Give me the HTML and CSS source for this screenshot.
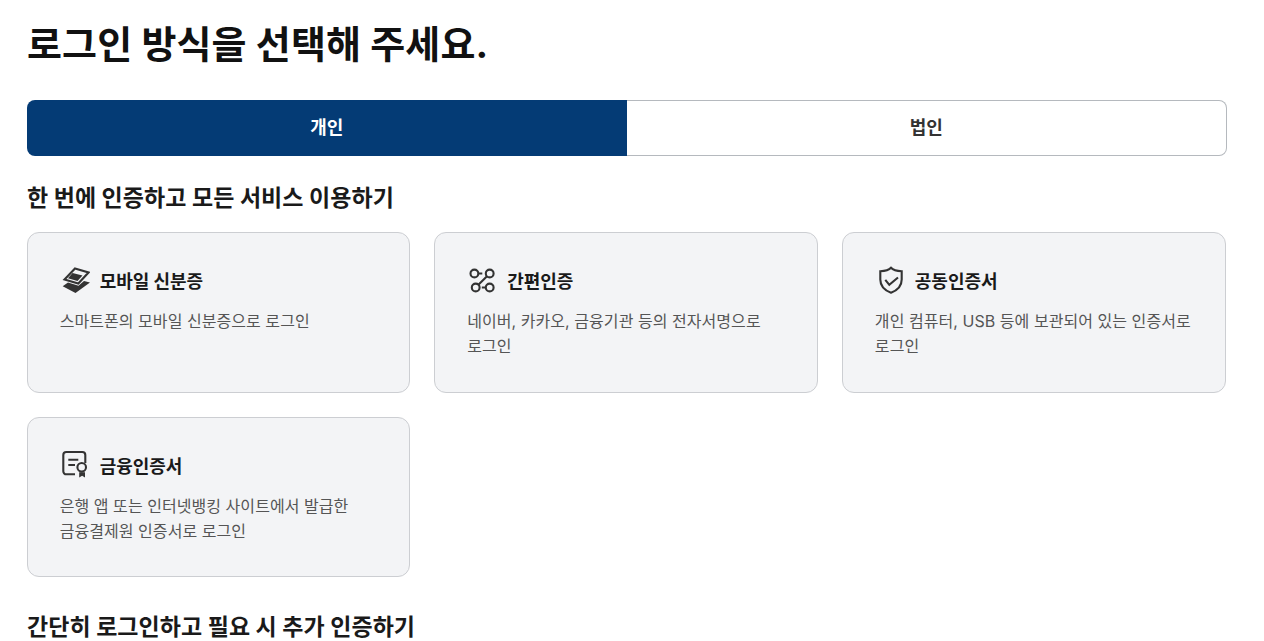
FILE: index.html
```html
<!DOCTYPE html>
<html lang="ko">
<head>
<meta charset="utf-8">
<title>로그인 방식 선택</title>
<link rel="stylesheet" href="styles.css">
</head>
<body>
<main class="page">
  <h1 class="title">로그인 방식을 선택해 주세요.</h1>
  <div class="tabs">
    <button class="tab tab-on">개인</button>
    <button class="tab">법인</button>
  </div>
  <h2 class="section">한 번에 인증하고 모든 서비스 이용하기</h2>
  <div class="cards">
    <article class="card">
      <div class="card-head">
        <svg class="icon" viewBox="0 0 30 30"><path class="line" d="M15 3.5 28.5 7.5 18.3 18.5 4.5 14.5z"/><path class="solid" d="M12.5 8 22.5 10.5l-5 5.5-9.5-2.7z"/><path class="solid" d="M2.7 21.2 8 17.5l10.5 3.3L24 16l6 1.5L15.5 28z"/></svg>
        <h3 class="card-title">모바일 신분증</h3>
      </div>
      <p class="card-text">스마트폰의 모바일 신분증으로 로그인</p>
    </article>
    <article class="card">
      <div class="card-head">
        <svg class="icon" viewBox="0 0 30 30"><circle class="line" cx="7.4" cy="8.5" r="3.9"/><circle class="line" cx="22.7" cy="8.5" r="3.9"/><circle class="line" cx="8.7" cy="22.5" r="3.9"/><circle class="line" cx="22.7" cy="22.5" r="3.9"/><path class="line" d="M11.3 8.5h4M20 11.3l-8.6 8.4M18.8 22.5h-4"/></svg>
        <h3 class="card-title">간편인증</h3>
      </div>
      <p class="card-text">네이버, 카카오, 금융기관 등의 전자서명으로 로그인</p>
    </article>
    <article class="card">
      <div class="card-head">
        <svg class="icon" viewBox="0 0 30 30"><path class="line" d="M16 2.8C18 5 22 6.1 26.7 6.3V14.5C26.7 21.5 22 25.5 16 27.7 10 25.5 5.3 21.5 5.3 14.5V6.3C10 6.1 14 5 16 2.8Z"/><path class="line" d="m10.3 14.8 4 5 8.7-7.3"/></svg>
        <h3 class="card-title">공동인증서</h3>
      </div>
      <p class="card-text">개인 컴퓨터, USB 등에 보관되어 있는 인증서로 로그인</p>
    </article>
    <article class="card">
      <div class="card-head">
        <svg class="icon" viewBox="0 0 30 30"><path class="line" d="M15 24.3H6.3a3 3 0 0 1-3-3V5a3 3 0 0 1 3-3h16a3 3 0 0 1 3 3v8"/><path class="line" d="M8.3 9.7h10M8.3 15h6.7"/><circle class="line" cx="21.7" cy="17.3" r="4.3"/><path class="solid" d="M19.2 22.3h5.8v5.2l-2.9-1.7-2.9 1.7z"/></svg>
        <h3 class="card-title">금융인증서</h3>
      </div>
      <p class="card-text">은행 앱 또는 인터넷뱅킹 사이트에서 발급한<br>금융결제원 인증서로 로그인</p>
    </article>
  </div>
  <h2 class="section section-next">간단히 로그인하고 필요 시 추가 인증하기</h2>
</main>
</body>
</html>
```
FILE: styles.css
```css
* { box-sizing: border-box; }
html, body { margin: 0; height: 100%; overflow: hidden; background: #fff; }
body { font-family: Inter, "Noto Sans CJK KR", sans-serif; color: #1a1a1a; }
.page { width: 1200px; margin-left: 27px; padding-top: 18px; }
.title { margin: 0; font-size: 38px; line-height: 52px; font-weight: 700; letter-spacing: 0.13px; color: #111; }
.tabs { display: flex; margin-top: 30px; height: 56px; }
.tab { flex: 1; border: 1px solid #b5b9be; border-left: 0; background: #fff; border-radius: 0 8px 8px 0; font: inherit; font-size: 18px; font-weight: 700; color: #333; padding: 0 0 4px; }
.tab-on { background: #043b75; border: 0; border-radius: 8px 0 0 8px; color: #fff; }
.section { margin: 26px 0 0; font-size: 23px; line-height: 32px; font-weight: 700; letter-spacing: 0.05px; color: #1a1a1a; }
.cards { display: grid; grid-template-columns: repeat(3, 383.7px); gap: 24px 23.9px; margin: 18px 0 0 -0.3px; }
.card { height: 160.5px; padding: 32px; background: #f3f4f6; border: 1px solid #ccced2; border-radius: 12px; word-break: keep-all; }
.card-head { display: flex; align-items: center; gap: 10px; height: 30px; }
.icon { width: 30px; height: 30px; flex: none; }
.line { fill: none; stroke: #333; stroke-width: 2.1; }
.solid { fill: #333; }
.card-title { margin: 0; font-size: 18px; font-weight: 700; letter-spacing: -0.05px; color: #1a1a1a; }
.card-text { margin: 14px 0 0; font-size: 16px; line-height: 25px; letter-spacing: 0.05px; color: #555; }
.section-next { margin-top: 34px; }
```
